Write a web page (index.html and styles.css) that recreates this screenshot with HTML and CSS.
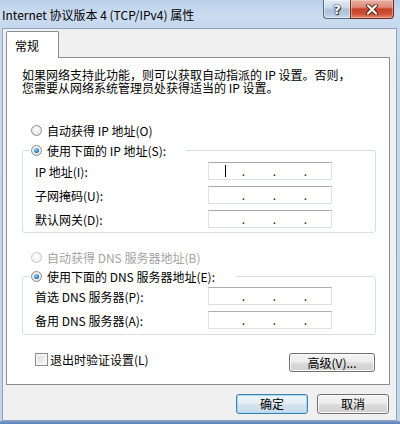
FILE: index.html
```html
<!DOCTYPE html>
<html lang="zh-CN">
<head>
<meta charset="utf-8">
<title>Internet 协议版本 4 (TCP/IPv4) 属性</title>
<link rel="stylesheet" href="styles.css">
</head>
<body>
<div class="window">
  <div class="titlebar">
    <span class="title">Internet 协议版本 4 (TCP/IPv4) 属性</span>
    <div class="caption">
      <div class="cap-help">?</div>
      <div class="cap-close">
        <svg width="12" height="11" viewBox="0 0 12 11">
          <path d="M2 1.5 L10 9.5 M10 1.5 L2 9.5" stroke="#5a1e14" stroke-width="4" stroke-linecap="round"/>
          <path d="M2 1.5 L10 9.5 M10 1.5 L2 9.5" stroke="#ffffff" stroke-width="2.2" stroke-linecap="round"/>
        </svg>
      </div>
    </div>
  </div>
  <div class="client">
    <div class="tabstrip"><div class="tab">常规</div></div>
    <div class="panel">
      <p class="intro"><span class="line">如果网络支持此功能，则可以获取自动指派的 IP 设置。否则，</span><span class="line">您需要从网络系统管理员处获得适当的 IP 设置。</span></p>

      <div class="opt opt-first"><span class="radio"></span><span>自动获得 IP 地址(O)</span></div>
      <fieldset class="group group-ip">
        <legend class="opt legend"><span class="radio on"></span><span>使用下面的 IP 地址(S):</span></legend>
        <div class="fields">
          <span class="lbl">IP 地址(I):</span>
          <div class="ipbox"><span class="seg"><span class="caret"></span>.</span><span class="seg">.</span><span class="seg">.</span></div>
          <span class="lbl">子网掩码(U):</span>
          <div class="ipbox"><span class="seg">.</span><span class="seg">.</span><span class="seg">.</span></div>
          <span class="lbl">默认网关(D):</span>
          <div class="ipbox"><span class="seg">.</span><span class="seg">.</span><span class="seg">.</span></div>
        </div>
      </fieldset>

      <div class="opt opt-dns disabled"><span class="radio"></span><span>自动获得 DNS 服务器地址(B)</span></div>
      <fieldset class="group group-dns">
        <legend class="opt legend"><span class="radio on"></span><span>使用下面的 DNS 服务器地址(E):</span></legend>
        <div class="fields">
          <span class="lbl">首选 DNS 服务器(P):</span>
          <div class="ipbox"><span class="seg">.</span><span class="seg">.</span><span class="seg">.</span></div>
          <span class="lbl">备用 DNS 服务器(A):</span>
          <div class="ipbox"><span class="seg">.</span><span class="seg">.</span><span class="seg">.</span></div>
        </div>
      </fieldset>

      <div class="bottom-row">
        <label class="check"><span class="checkbox"></span><span>退出时验证设置(L)</span></label>
        <button class="btn btn-adv">高级(V)...</button>
      </div>
    </div>
    <div class="actions">
      <button class="btn btn-default">确定</button>
      <button class="btn">取消</button>
    </div>
  </div>
  <div class="frame-bottom"></div>
</div>
</body>
</html>
```

FILE: styles.css
```css
* { box-sizing: border-box; }
html, body { margin: 0; padding: 0; }
body {
  width: 400px;
  height: 424px;
  overflow: hidden;
  font-family: "Noto Sans CJK SC", "Liberation Sans", sans-serif;
  font-size: 12px;
  color: #000;
  background: #c4d6ec;
}
.window {
  width: 400px;
  height: 424px;
  display: flex;
  flex-direction: column;
  background: linear-gradient(to bottom, #b8cfe9 0, #cadcf0 14px, #c6d8ee 28px, #c3d5eb 100%);
}
.titlebar {
  height: 28px;
  flex: none;
  display: flex;
  justify-content: space-between;
  align-items: flex-start;
  padding-left: 2px;
}
.title {
  margin-top: 8px;
  line-height: 14px;
  font-size: 12px;
  color: #000;
  white-space: nowrap;
}
.caption {
  display: flex;
  height: 19px;
  margin-right: 6px;
}
.cap-help {
  width: 27px;
  height: 19px;
  border: 1px solid #5a6a80;
  border-top: none;
  border-right: none;
  border-radius: 0 0 0 4px;
  background: linear-gradient(to bottom, #e3ebf5 0%, #cbd8e8 45%, #aebfd6 50%, #b8c9df 80%, #cbd9ea 100%);
  box-shadow: inset 0 0 0 1px rgba(255,255,255,0.45);
  display: flex;
  align-items: center;
  justify-content: center;
  color: #fff;
  font: bold 13px "DejaVu Sans", sans-serif;
  text-shadow: 0 0 1px #1f2e44, 0 0 2px #1f2e44, 1px 1px 1px #1f2e44;
}
.cap-close {
  width: 44px;
  height: 19px;
  border: 1px solid #6a2a20;
  border-top: none;
  border-radius: 0 0 4px 0;
  background: linear-gradient(to bottom, #eab0a2 0%, #dc8a76 40%, #c7412a 50%, #cf4c33 75%, #e08a6c 100%);
  box-shadow: inset 0 0 0 1px rgba(255,220,210,0.45);
  display: flex;
  align-items: center;
  justify-content: center;
}
.client {
  flex: none;
  margin-left: 2px;
  width: 395px;
  height: 393px;
  border: 1px solid #8fa3bc;
  background: #f0f0f0;
  padding: 2px 0 0 3px;
  display: flex;
  flex-direction: column;
}
.frame-bottom {
  flex: 1;
  background: linear-gradient(to bottom, #7d9fcd, #5b80b6);
}
.tabstrip {
  display: flex;
  height: 26px;
  position: relative;
  z-index: 1;
}
.tab {
  width: 53px;
  height: 27px;
  background: #fff;
  border: 1px solid #898c95;
  border-bottom: none;
  border-radius: 2px 2px 0 0;
  padding: 6px 0 0 8px;
  line-height: 16px;
}
.panel {
  width: 384px;
  height: 328px;
  background: #fff;
  border: 1px solid #898c95;
  display: flex;
  flex-direction: column;
}
.intro {
  margin: 10px 0 0 15px;
  display: flex;
  flex-direction: column;
  white-space: nowrap;
}
.intro .line {
  display: block;
  height: 13px;
  line-height: 13px;
}
.opt {
  display: flex;
  align-items: center;
  height: 16px;
  white-space: nowrap;
}
.opt-first { margin: 28px 0 0 24px; }
.opt-dns { margin: 16px 0 0 24px; }
.disabled { color: #a3a3a3; }
.radio {
  flex: none;
  width: 11px;
  height: 11px;
  border-radius: 50%;
  border: 1px solid #8c8e90;
  background: radial-gradient(circle at 50% 40%, #ffffff 0%, #ececec 55%, #cfd1d3 100%);
  margin-right: 5px;
  position: relative;
}
.radio.on::after {
  content: "";
  position: absolute;
  left: 2px;
  top: 2px;
  width: 5px;
  height: 5px;
  border-radius: 50%;
  background: radial-gradient(circle at 40% 35%, #a6dcff 0%, #2f7cc2 55%, #184e8a 100%);
}
.disabled .radio {
  border-color: #c6c8ca;
  background: radial-gradient(circle at 50% 40%, #ffffff 0%, #f4f4f4 60%, #e4e4e4 100%);
}
.group {
  margin: 0 13px 0 15px;
  padding: 4px 0 4px 0;
  border: 1px solid #d5dfe5;
  border-radius: 3px;
  min-inline-size: 0;
}
.group-ip { margin-top: 4px; }
.group-dns { margin-top: 3px; padding: 3px 0 5px 0; }
.legend {
  margin-left: 7px;
  padding: 0 20px 0 1px;
}
.fields {
  display: grid;
  grid-template-columns: 173px 124px;
  grid-auto-rows: 18px;
  row-gap: 6px;
  padding-left: 12px;
}
.lbl {
  display: flex;
  align-items: center;
  white-space: nowrap;
}
.ipbox {
  height: 18px;
  background: #fff;
  border: 1px solid #dbdfe6;
  border-top-color: #abadb3;
  border-left-color: #e2e3ea;
  border-right-color: #e2e3ea;
  display: flex;
  padding-left: 5px;
}
.seg {
  width: 31px;
  text-align: right;
  line-height: 16px;
  color: #222;
  position: relative;
}
.caret {
  position: absolute;
  left: 11px;
  top: 2px;
  width: 1px;
  height: 12px;
  background: #000;
}
.bottom-row {
  margin: 18px 14px 0 28px;
  display: flex;
  justify-content: space-between;
  align-items: flex-start;
}
.check {
  display: flex;
  align-items: center;
  height: 13px;
  white-space: nowrap;
}
.checkbox {
  width: 13px;
  height: 13px;
  border: 1px solid #8e8f8f;
  background: linear-gradient(135deg, #d3d6da 0%, #e9eaec 50%, #fbfbfb 100%);
  box-shadow: inset 0 0 0 2px #f4f4f4;
  margin-right: 2px;
  flex: none;
}
.btn {
  height: 20px;
  padding: 0;
  border: 1px solid #707070;
  border-radius: 3px;
  background: linear-gradient(to bottom, #f4f4f4 0%, #ececec 48%, #dddddd 52%, #cfcfcf 100%);
  box-shadow: inset 0 0 0 1px #fbfbfb;
  font-family: "Noto Sans CJK SC", "Liberation Sans", sans-serif;
  font-size: 12px;
  line-height: 18px;
  color: #000;
}
.btn-adv { width: 86px; height: 19px; line-height: 17px; }
.actions {
  margin-top: 9px;
  padding-right: 7px;
  display: flex;
  justify-content: flex-end;
  gap: 9px;
}
.actions .btn { width: 72px; }
.btn-default {
  border-color: #3c7fb1;
  box-shadow: inset 0 0 0 1px #a7dcf6;
  background: linear-gradient(to bottom, #eef6fb 0%, #e3eef6 48%, #d3e3ee 52%, #c8dbe9 100%);
}
```
